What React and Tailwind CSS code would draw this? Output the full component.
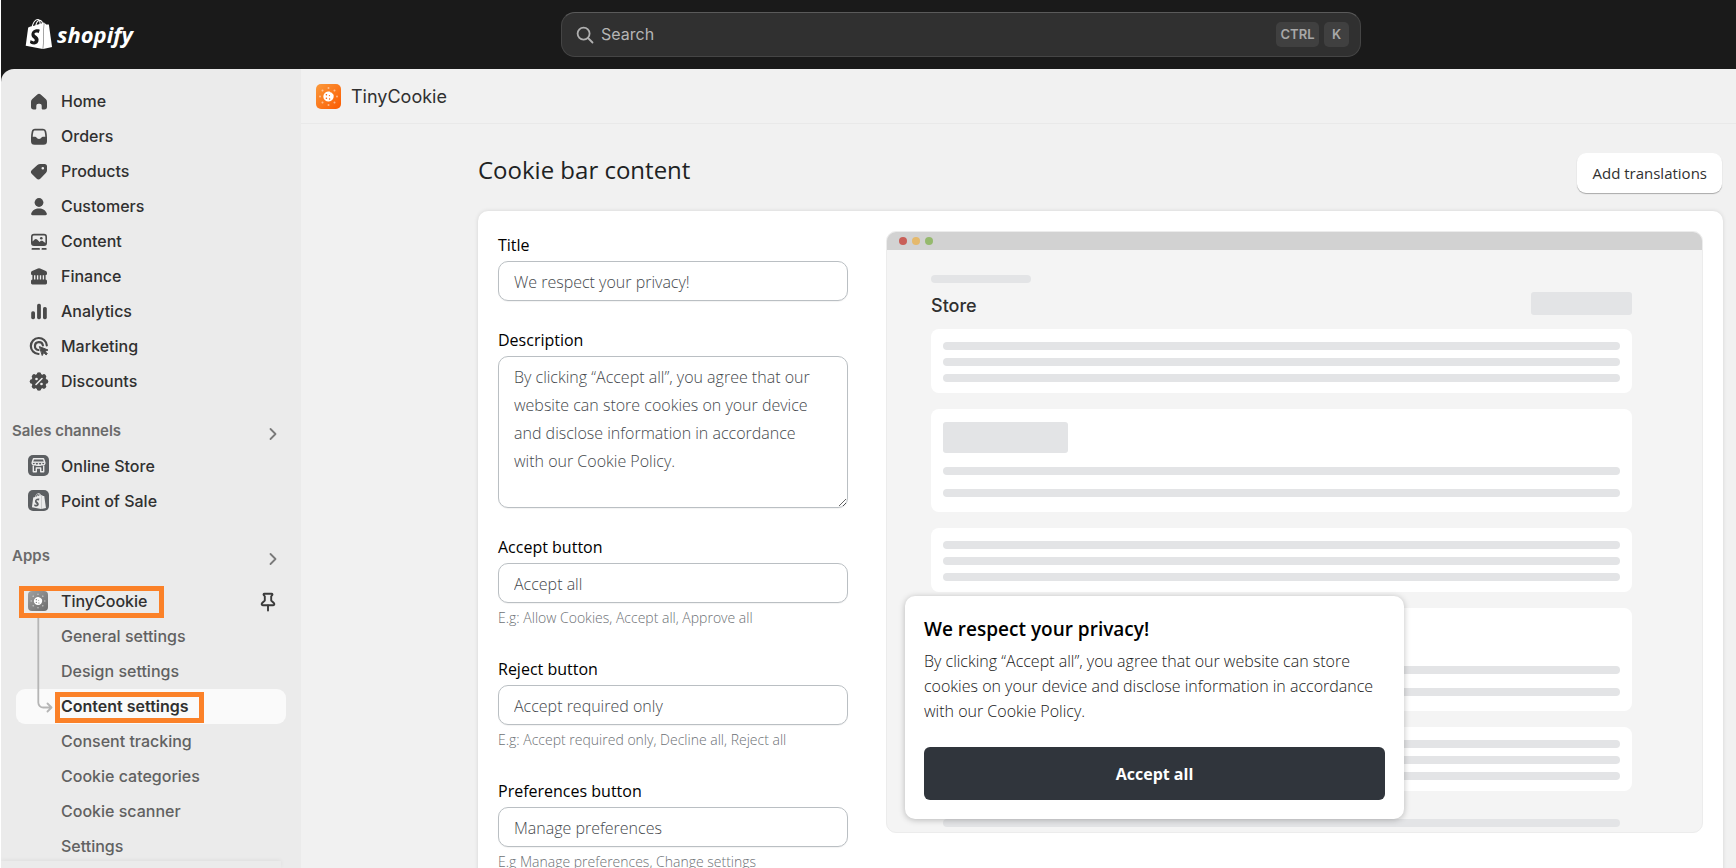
import React from 'react';
import { SiShopify } from 'react-icons/si';

const GRAY = '#4a4a4a';

function HomeIcon() {
  return (
    <svg viewBox="0 0 20 20" className="w-5 h-5" fill={GRAY}>
      <path d="M8.3 3.6a2.5 2.5 0 0 1 3.4 0l5 4.4A3.9 3.9 0 0 1 18 10.9v4.9a2.6 2.6 0 0 1-2.6 2.6h-1.7a1 1 0 0 1-1-1v-2.6a2 2 0 0 0-2-2H9.3a2 2 0 0 0-2 2v2.6a1 1 0 0 1-1 1H4.6A2.6 2.6 0 0 1 2 15.8v-4.9A3.9 3.9 0 0 1 3.3 8z" />
    </svg>
  );
}

function OrdersIcon() {
  return (
    <svg viewBox="0 0 20 20" className="w-5 h-5" fill={GRAY} fillRule="evenodd">
      <path d="M6 2.8h8a3.4 3.4 0 0 1 3.3 2.7c.5 2 .7 4.2.7 6.5v3.3a3.5 3.5 0 0 1-3.5 3.5h-9A3.5 3.5 0 0 1 2 15.3V12c0-2.3.2-4.5.7-6.5A3.4 3.4 0 0 1 6 2.8zM6 4.5c-.8 0-1.4.5-1.6 1.2-.4 1.6-.6 3.2-.7 5.1h2.4c.6 0 1.1.3 1.4.8.5.9 1.3 1.4 2.5 1.4s2-.5 2.5-1.4c.3-.5.8-.8 1.4-.8h2.4c-.1-1.9-.3-3.5-.7-5.1-.2-.7-.8-1.2-1.6-1.2z" />
    </svg>
  );
}

function ProductsIcon() {
  return (
    <svg viewBox="0 0 20 20" className="w-5 h-5" fill={GRAY} fillRule="evenodd">
      <path d="M11.3 3h4.2A2.5 2.5 0 0 1 18 5.5v3.7c0 1.1-.4 2.1-1.2 2.9l-5.3 5.5a2.8 2.8 0 0 1-4 0l-4.6-4.5a2.8 2.8 0 0 1 0-4l5.5-5A4.2 4.2 0 0 1 11.3 3zM13.8 8.5a1.3 1.3 0 1 0 0-2.6 1.3 1.3 0 0 0 0 2.6z" />
    </svg>
  );
}

function CustomersIcon() {
  return (
    <svg viewBox="0 0 20 20" className="w-5 h-5" fill={GRAY}>
      <circle cx="10" cy="6.5" r="4.4" />
      <path d="M2.2 17.6C3.2 14.5 6.3 12.6 10 12.6s6.8 1.9 7.8 5c.3.9-.4 1.6-1.3 1.6h-13c-.9 0-1.6-.7-1.3-1.6z" />
    </svg>
  );
}

function ContentIcon() {
  return (
    <svg viewBox="0 0 20 20" className="w-5 h-5" fill={GRAY} fillRule="evenodd">
      <path d="M5 2.8h10a3 3 0 0 1 3 3V12a3 3 0 0 1-3 3H5a3 3 0 0 1-3-3V5.8a3 3 0 0 1 3-3zM5 4.4c-.8 0-1.4.6-1.4 1.4v4.6l2-1.9c.7-.7 1.8-.7 2.5 0l2.5 2.5 1-.9c.6-.5 1.5-.5 2.1 0l2.7 2V5.8c0-.8-.6-1.4-1.4-1.4z" />
      <circle cx="12.3" cy="7.3" r="1.3" />
      <rect x="2.5" y="17" width="8.5" height="1.8" rx=".9" />
      <rect x="12.5" y="17" width="5.2" height="1.8" rx=".9" />
    </svg>
  );
}

function FinanceIcon() {
  return (
    <svg viewBox="0 0 20 20" className="w-5 h-5" fill={GRAY}>
      <path d="M8.9 2.5a2.5 2.5 0 0 1 2.2 0l5.8 2.6A2 2 0 0 1 18 6.9v.8c0 .8-.6 1.4-1.4 1.4v4.4c.8.1 1.4.8 1.4 1.6v2c0 .8-.6 1.4-1.4 1.4H3.4c-.8 0-1.4-.6-1.4-1.4v-2c0-.8.6-1.5 1.4-1.6V9.1C2.6 9.1 2 8.500 2 7.700v-.8c0-.8.4-1.5 1.1-1.8z" />
      <path d="M5.7 9.2v4.3M8.6 9.2v4.3M11.5 9.2v4.3M14.4 9.2v4.3" stroke="#ebebeb" strokeWidth="1.4" />
    </svg>
  );
}

function AnalyticsIcon() {
  return (
    <svg viewBox="0 0 20 20" className="w-5 h-5" fill={GRAY}>
      <rect x="2.2" y="10.3" width="3.8" height="7.9" rx="1.6" />
      <rect x="8.1" y="2.8" width="3.8" height="15.4" rx="1.6" />
      <rect x="14" y="6" width="3.8" height="12.2" rx="1.6" />
    </svg>
  );
}

function MarketingIcon() {
  return (
    <svg viewBox="0 0 20 20" className="w-5 h-5" fill="none" stroke={GRAY} strokeWidth="2.2" strokeLinecap="round">
      <path d="M17.8 9.4A8 8 0 1 0 9.5 18" />
      <path d="M13.9 9.4A4 4 0 1 0 9.4 14" />
      <path d="M10.7 10.7l8.3 3.3-3 1.3 2.3 2.5-1.2 1.1-2.4-2.4-1.3 2.7z" fill={GRAY} strokeWidth="1" strokeLinejoin="round" />
    </svg>
  );
}

function DiscountsIcon() {
  return (
    <svg viewBox="0 0 20 20" className="w-5 h-5 overflow-visible" fill={GRAY}>
      <circle cx="10" cy="10.5" r="7.6" />
      {[0, 45, 90, 135, 180, 225, 270, 315].map((angle) => (
        <circle key={angle} cx="10" cy="3.5" r="2.3" transform={`rotate(${angle} 10 10.5)`} />
      ))}
      <path d="M13 7.5l-6 6" stroke="#ebebeb" strokeWidth="1.6" strokeLinecap="round" />
      <circle cx="7.5" cy="8" r="1.3" fill="#ebebeb" />
      <circle cx="12.5" cy="13" r="1.3" fill="#ebebeb" />
    </svg>
  );
}

function OnlineStoreIcon() {
  return (
    <svg viewBox="0 0 21 21" className="w-[21px] h-[21px]">
      <rect width="21" height="21" rx="5" fill="#5c5f62" />
      <g fill="none" stroke="#ebebeb" strokeWidth="1.4" strokeLinejoin="round">
        <path d="M5.5 3.8h10l1.3 3.7v1.2a1.6 1.6 0 0 1-3.1 0 1.6 1.6 0 0 1-3.2 0 1.6 1.6 0 0 1-3.2 0 1.6 1.6 0 0 1-3.1 0V7.5z" />
        <path d="M4.5 7.2h12" />
        <path d="M5.3 10.5v6.3h3V13h4.4v3.8h3v-6.3" />
      </g>
    </svg>
  );
}

function PosIcon() {
  return (
    <span className="flex w-[21px] h-[21px] items-center justify-center rounded-[5px] bg-[#5c5f62]">
      <SiShopify className="w-4 h-4 text-[#ebebeb]" />
    </span>
  );
}

function CookieLogo({ className, from, to, id }) {
  const dots = [0, 45, 90, 135, 180, 225, 270, 315];
  return (
    <svg viewBox="0 0 25 25" className={className}>
      <defs>
        <linearGradient id={id} x1="0" y1="0" x2="1" y2="1">
          <stop offset="0" stopColor={from} />
          <stop offset="1" stopColor={to} />
        </linearGradient>
      </defs>
      <rect width="25" height="25" rx="5" fill={`url(#${id})`} />
      {dots.map((angle) => (
        <circle key={angle} cx="12.5" cy="4" r="1" fill="#fff" opacity=".5" transform={`rotate(${angle} 12.5 12.5)`} />
      ))}
      <path d="M12 7.5c1.4-.3 2.3.2 2.7 1 .8-.2 1.3.2 1.5.9 1 .3 1.5 1.4 1.5 2.7a5.2 5.2 0 0 1-10.4.6c0-2.700 2-4.800 4.700-5.200z" fill="#fff" />
      <g fill={to}>
        <circle cx="10.4" cy="10.8" r=".8" />
        <circle cx="13.4" cy="11.6" r=".6" />
        <circle cx="10.4" cy="14.2" r=".8" />
        <circle cx="13.6" cy="15" r=".7" />
      </g>
    </svg>
  );
}

function PinIcon() {
  return (
    <svg viewBox="0 0 16 20" className="w-4 h-5" fill="none" stroke="#3a3a3a" strokeWidth="1.9" strokeLinejoin="round" strokeLinecap="round">
      <path d="M4.3 1.8h7.4c.8 0 1 .9.5 1.4l-1 1.1v4.2l2.6 2.5c.9 1 .6 2.2-.6 2.2H2.8c-1.2 0-1.5-1.2-.6-2.2l2.6-2.5V4.3l-1-1.100c-.5-.5-.3-1.400.5-1.400z" />
      <path d="M8 13.5v5" />
    </svg>
  );
}

function Chevron() {
  return (
    <svg viewBox="0 0 10 14" className="mt-1 w-[10px] h-[14px]" fill="none" stroke="#7a7a7a" strokeWidth="1.8" strokeLinecap="round" strokeLinejoin="round">
      <path d="M2.5 2l5 5-5 5" />
    </svg>
  );
}

const mainLinks = [
  { label: 'Home', Icon: HomeIcon },
  { label: 'Orders', Icon: OrdersIcon },
  { label: 'Products', Icon: ProductsIcon },
  { label: 'Customers', Icon: CustomersIcon },
  { label: 'Content', Icon: ContentIcon },
  { label: 'Finance', Icon: FinanceIcon },
  { label: 'Analytics', Icon: AnalyticsIcon },
  { label: 'Marketing', Icon: MarketingIcon },
  { label: 'Discounts', Icon: DiscountsIcon },
];

const channelLinks = [
  { label: 'Online Store', Icon: OnlineStoreIcon },
  { label: 'Point of Sale', Icon: PosIcon },
];

const appLinks = [
  'General settings',
  'Design settings',
  'Content settings',
  'Consent tracking',
  'Cookie categories',
  'Cookie scanner',
  'Settings',
];

function NavLink({ label, Icon }) {
  return (
    <a href="#" className="flex h-[35px] items-center pl-[27px] text-base font-medium text-[#303030]">
      <span className="flex w-[21px] shrink-0 justify-center">
        <Icon />
      </span>
      <span className="ml-3">{label}</span>
    </a>
  );
}

function SectionHeading({ children }) {
  return (
    <button className="flex h-[33px] w-full items-center justify-between pl-[11px] pr-[23px] text-[15px] font-semibold text-[#6a6a6a]">
      <span>{children}</span>
      <Chevron />
    </button>
  );
}

function Sidebar() {
  return (
    <aside className="flex w-[300px] shrink-0 flex-col overflow-hidden rounded-tl-[13px] bg-[#ebebeb]">
      <nav className="min-h-0 flex-1 overflow-hidden pt-[14px]">
        {mainLinks.map((link) => (
          <NavLink key={link.label} {...link} />
        ))}

        <div className="mt-[17px]">
          <SectionHeading>Sales channels</SectionHeading>
          {channelLinks.map((link) => (
            <NavLink key={link.label} {...link} />
          ))}
        </div>

        <div className="mt-[22px]">
          <SectionHeading>Apps</SectionHeading>
          <div className="relative mt-[11px]">
            <div className="flex items-center justify-between pr-[25px]">
              <a href="#" className="flex h-[35px] items-center pb-[2px] pl-[27px] text-base font-medium text-[#303030]">
                <CookieLogo id="cookie-gray" className="w-5 h-5" from="#a0a0a0" to="#6c6c6c" />
                <span className="ml-[13px]">TinyCookie</span>
              </a>
              <button aria-label="Unpin TinyCookie">
                <PinIcon />
              </button>
            </div>
            {appLinks.map((label) => {
              const active = label === 'Content settings';
              return (
                <a
                  key={label}
                  href="#"
                  className={`relative mx-[15px] flex h-[35px] items-center rounded-[9px] pl-[45px] pb-px text-base ${active ? 'bg-[#fafafa] font-semibold text-[#303030]' : 'font-medium text-[#616161]'}`}
                >
                  {label}
                  {active && <span className="absolute left-[39px] top-[3px] h-[31px] w-[149px] border-[5px] border-[#fb8128]" />}
                </a>
              );
            })}
            <span className="absolute left-[18px] top-[2px] h-8 w-[145px] border-[5px] border-[#fb8128]" />
            <svg viewBox="0 0 16 96" className="absolute left-[36px] top-[34px] h-24 w-4" fill="none" stroke="#b5b5b5" strokeWidth="1.8" strokeLinecap="round" strokeLinejoin="round">
              <path d="M1.3 0v84.5a5 5 0 0 0 5 5h7.7M10.5 85.5l4 4-4 4" />
            </svg>
          </div>
        </div>
      </nav>
      <div className="mr-5 h-[7px] shrink-0 bg-[#ebebeb] shadow-[0_-1px_4px_rgba(0,0,0,0.06)]" />
    </aside>
  );
}

function TopBar() {
  return (
    <header className="grid h-[69px] shrink-0 grid-cols-[560px_1fr_375px] items-center bg-[#1a1a1a]">
      <a href="#" className="flex items-center pb-[2px] pl-[23px] text-white" aria-label="shopify">
        <SiShopify className="h-[30px] w-[30px]" />
        <span className="ml-[3px] font-['Open_Sans'] text-[22px] font-bold italic leading-7">shopify</span>
      </a>
      <div className="flex h-[45px] items-center rounded-[14px] border border-[#454545] border-t-[#5a5a5a] bg-[#303030] pl-[14px] pr-[11px]">
        <svg viewBox="0 0 18 18" className="h-[18px] w-[18px]" fill="none" stroke="#b0b0b0" strokeWidth="1.8" strokeLinecap="round">
          <circle cx="7.6" cy="7.6" r="6" />
          <path d="M12 12l4.5 4.5" />
        </svg>
        <input
          type="text"
          aria-label="Search"
          placeholder="Search"
          className="ml-[7px] min-w-0 flex-1 bg-transparent pb-px text-base text-[#b5b5b5] outline-none placeholder:text-[#b5b5b5]"
        />
        <kbd className="flex h-[25px] w-[43px] items-center justify-center rounded-[5px] bg-[#404040] font-['Inter'] text-[13px] font-semibold text-[#a8a8a8]">CTRL</kbd>
        <kbd className="ml-[5px] flex h-[25px] w-[25px] items-center justify-center rounded-[5px] bg-[#404040] font-['Inter'] text-[13px] font-semibold text-[#a8a8a8]">K</kbd>
      </div>
    </header>
  );
}

const inputClass = 'w-full rounded-[10px] border border-[#babfc3] bg-white pl-[15px] font-light text-[#45494d] shadow-[0_1px_1px_rgba(0,0,0,0.05)]';

function Field({ id, label, value, hint, multiline }) {
  return (
    <div>
      <label htmlFor={id} className="block h-[30px] text-base leading-7 text-black">{label}</label>
      {multiline ? (
        <textarea id={id} defaultValue={value} className={`${inputClass} block h-[152px] py-[6px] pr-6 text-base leading-7`} />
      ) : (
        <input id={id} type="text" defaultValue={value} className={`${inputClass} block h-10 pr-[15px] pt-px text-base`} />
      )}
      {hint && <p className="pt-[3px] text-sm font-light leading-6 text-[#6d7175]">{hint}</p>}
    </div>
  );
}

function Line() {
  return <div className="h-2 rounded-full bg-[#e3e4e6]" />;
}

function LinesCard() {
  return (
    <div className="flex flex-col gap-2 rounded-lg bg-white px-3 pb-[11px] pt-[13px]">
      <Line />
      <Line />
      <Line />
    </div>
  );
}

function MediaCard() {
  return (
    <div className="flex flex-col gap-[14px] rounded-lg bg-white px-3 pb-[15px] pt-[13px]">
      <div className="h-[31px] w-[125px] rounded-[3px] bg-[#e3e4e6]" />
      <Line />
      <Line />
    </div>
  );
}

function CookieBanner() {
  return (
    <div className="absolute bottom-[13px] left-[18px] w-[499px] rounded-[10px] bg-white px-[19px] pb-[19px] pt-[18px] shadow-[0_1px_6px_rgba(0,0,0,0.25)]">
      <h3 className="text-[19px] font-semibold leading-[30px] text-black">We respect your privacy!</h3>
      <p className="mt-[5px] text-base font-light leading-[25px] text-[#202020]">
        By clicking “Accept all”, you agree that our website can store cookies on your device and disclose information in accordance with our Cookie Policy.
      </p>
      <button className="mt-[23px] h-[53px] w-full rounded-md bg-[#30353c] text-base font-bold text-white">Accept all</button>
    </div>
  );
}

function Preview() {
  return (
    <div className="relative h-[602px] min-w-0 flex-1 overflow-hidden rounded-[10px] border border-[#ececec] bg-[#f4f4f4]">
      <div className="-mx-px -mt-px flex h-[19px] items-center gap-[5px] bg-[#d2d2d2] pl-[13px]">
        <span className="h-2 w-2 rounded-full bg-[#c95f58]" />
        <span className="h-2 w-2 rounded-full bg-[#e5b96c]" />
        <span className="h-2 w-2 rounded-full bg-[#95b96d]" />
      </div>
      <div className="pl-11 pr-[70px] pt-[25px]">
        <div className="flex items-end justify-between">
          <div>
            <div className="h-2 w-[100px] rounded-full bg-[#e3e4e6]" />
            <h2 className="mt-[11px] font-['Inter'] text-lg font-medium leading-6 text-[#303030]">Store</h2>
          </div>
          <div className="mb-[3px] h-[23px] w-[101px] rounded-[3px] bg-[#e3e4e6]" />
        </div>
        <div className="mt-[11px] flex flex-col gap-4">
          <LinesCard />
          <MediaCard />
          <LinesCard />
          <MediaCard />
          <LinesCard />
          <div className="p-3">
            <Line />
          </div>
        </div>
      </div>
      <CookieBanner />
    </div>
  );
}

function ContentPage() {
  return (
    <div className="min-h-0 flex-1 overflow-hidden pl-[177px] pr-[13px] pt-[29px] font-['Open_Sans',sans-serif]">
      <div className="flex items-center justify-between">
        <h1 className="pb-[6px] text-2xl leading-8 text-[#202223]">Cookie bar content</h1>
        <button className="mr-px h-10 rounded-[9px] bg-white px-[15px] pt-px text-[15px] text-[#303030] shadow-[0_1px_1px_rgba(0,0,0,0.3)]">Add translations</button>
      </div>
      <div className="mt-[18px] flex items-start gap-[38px] rounded-[10px] bg-white p-5 shadow-[0_0_4px_rgba(0,0,0,0.12)]">
        <form className="flex w-[350px] shrink-0 flex-col gap-[25px]">
          <Field id="title" label="Title" value="We respect your privacy!" />
          <Field
            id="description"
            label="Description"
            value="By clicking “Accept all”, you agree that our website can store cookies on your device and disclose information in accordance with our Cookie Policy."
            multiline
          />
          <Field id="accept" label="Accept button" value="Accept all" hint="E.g: Allow Cookies, Accept all, Approve all" />
          <Field id="reject" label="Reject button" value="Accept required only" hint="E.g: Accept required only, Decline all, Reject all" />
          <Field id="preferences" label="Preferences button" value="Manage preferences" hint="E.g Manage preferences, Change settings" />
        </form>
        <Preview />
      </div>
    </div>
  );
}

function App() {
  return (
    <div className="h-screen bg-white pl-px font-['Inter',sans-serif]">
      <div className="flex h-full flex-col overflow-hidden bg-[#1a1a1a]">
        <TopBar />
        <div className="flex min-h-0 flex-1">
          <Sidebar />
          <main className="flex min-w-0 flex-1 flex-col bg-[#f1f1f1]">
            <div className="flex h-[55px] shrink-0 items-center border-b border-[#e9e9e9] pl-[15px] pt-px">
              <CookieLogo id="cookie-orange" className="h-[25px] w-[25px]" from="#fb9a3c" to="#fb5a00" />
              <span className="ml-[10px] text-lg leading-6 text-[#303030]">TinyCookie</span>
            </div>
            <ContentPage />
          </main>
        </div>
      </div>
    </div>
  );
}

export default App;
